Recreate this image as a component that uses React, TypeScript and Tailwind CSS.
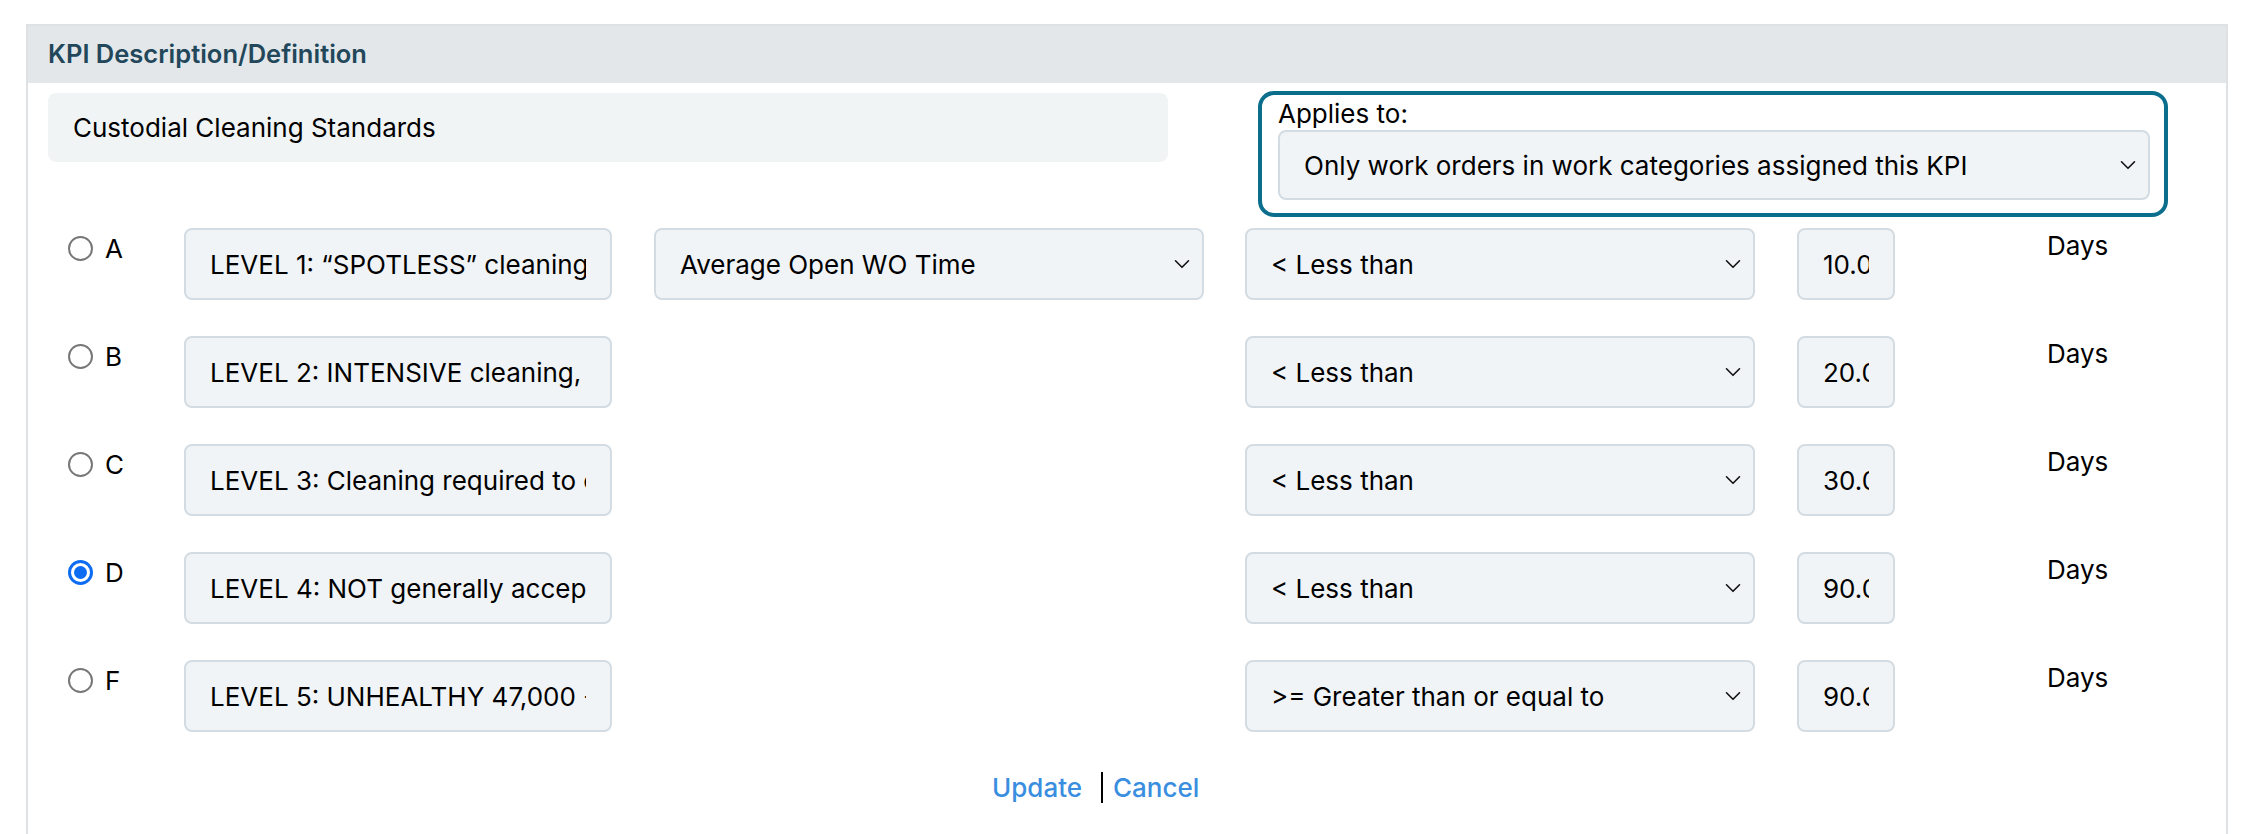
import { useState } from "react";

const comparators = ["< Less than", "<= Less than or equal to", "> Greater than", ">= Greater than or equal to", "= Equal to"];
const metrics = ["Average Open WO Time", "Average Completion Time", "Percent Completed On Time"];

const rows = [
  { grade: "A", desc: "LEVEL 1: “SPOTLESS” cleaning, 100% of the time", metric: true, cmp: "< Less than", value: "10.00" },
  { grade: "B", desc: "LEVEL 2: INTENSIVE cleaning, most of the time", metric: false, cmp: "< Less than", value: "20.00" },
  { grade: "C", desc: "LEVEL 3: Cleaning required to ensure health", metric: false, cmp: "< Less than", value: "30.00" },
  { grade: "D", desc: "LEVEL 4: NOT generally acceptable for most", metric: false, cmp: "< Less than", value: "90.00" },
  { grade: "F", desc: "LEVEL 5: UNHEALTHY 47,000 - 60,000 sq ft", metric: false, cmp: ">= Greater than or equal to", value: "90.00" },
];

function Chevron() {
  return (
    <svg
      width="16"
      height="10"
      viewBox="0 0 16 10"
      fill="none"
      className="pointer-events-none absolute right-[14px] top-1/2 -translate-y-1/2"
    >
      <path d="M1.5 1.8 L8 8.3 L14.5 1.8" stroke="#111" strokeWidth="1.6" strokeLinecap="round" strokeLinejoin="round" />
    </svg>
  );
}

function SelectBox({ value, options, className }: { value: string; options: string[]; className: string }) {
  return (
    <div className={`relative ${className}`}>
      <select
        defaultValue={value}
        className="h-full w-full appearance-none rounded-lg border-2 border-[#d3dce2] bg-[#f1f4f6] pl-6 pr-12 text-[26px] text-black outline-none"
      >
        {options.map((o) => (
          <option key={o}>{o}</option>
        ))}
      </select>
      <Chevron />
    </div>
  );
}

function Radio({ checked, onClick }: { checked: boolean; onClick: () => void }) {
  if (checked) {
    return (
      <span onClick={onClick} className="flex h-[25px] w-[25px] items-center justify-center rounded-full border-[3px] border-[#0e6cf3] bg-white">
        <span className="h-[13px] w-[13px] rounded-full bg-[#0e6cf3]" />
      </span>
    );
  }
  return <span onClick={onClick} className="h-[25px] w-[25px] rounded-full border-2 border-[#777] bg-white" />;
}

export default function App() {
  const [selected, setSelected] = useState("D");

  return (
    <div className="h-screen overflow-hidden bg-white pl-[26px] pr-[27px] pt-6 font-['Inter','Liberation_Sans',sans-serif] text-black">
      <div className="min-h-[830px] border-2 border-b-0 border-[#dfe2e5]">
        <div className="flex h-[57px] items-center bg-[#e3e7ea] px-5">
          <h3 className="text-[25.5px] font-semibold text-[#22475b]">KPI Description/Definition</h3>
        </div>

        <div className="px-5">
          <div className="flex items-start">
            <div className="mt-[10px] flex h-[69px] w-[1120px] items-center rounded-lg bg-[#f1f4f5] px-[25px] text-[26px]">
              Custodial Cleaning Standards
            </div>
            <div className="ml-auto mr-[38px] mt-2 h-[126px] w-[910px] rounded-2xl border-4 border-[#0c6e8d] pl-4 pr-[14px]">
              <div className="pt-0.5 text-[26px] leading-[33px]">Applies to:</div>
              <SelectBox
                value="Only work orders in work categories assigned this KPI"
                options={["Only work orders in work categories assigned this KPI", "All work orders"]}
                className="h-[70px] w-full"
              />
            </div>
          </div>

          <div className="mt-[11px] flex flex-col gap-9">
            {rows.map((r) => (
              <div key={r.grade} className="flex h-[72px] items-start">
                <div className="mt-0.5 flex h-9 w-[136px] items-center gap-3 pl-5 text-[26px]">
                  <Radio checked={selected === r.grade} onClick={() => setSelected(r.grade)} />
                  <span>{r.grade}</span>
                </div>
                <input
                  readOnly
                  value={r.desc}
                  className="h-[72px] w-[428px] rounded-lg border-2 border-[#d3dce2] bg-[#f1f4f6] px-6 text-[26px] text-black outline-none"
                />
                {r.metric ? (
                  <SelectBox value="Average Open WO Time" options={metrics} className="ml-[42px] h-[72px] w-[550px]" />
                ) : (
                  <div className="ml-[42px] w-[550px]" />
                )}
                <SelectBox value={r.cmp} options={comparators} className="ml-[41px] h-[72px] w-[510px]" />
                <input
                  readOnly
                  value={r.value}
                  className="ml-[42px] h-[72px] w-[98px] rounded-lg border-2 border-[#d3dce2] bg-[#f1f4f6] px-6 text-[26px] text-black outline-none"
                />
                <span className="ml-[152px] text-[26px] leading-9">Days</span>
              </div>
            ))}
          </div>

          <div className="mt-[37px] flex h-9 items-center pl-[944px] text-[26px] font-medium">
            <a href="#" className="text-[#3a8ee0]">Update</a>
            <span className="ml-[19px] h-[31px] w-[2px] bg-black" />
            <a href="#" className="ml-[10px] text-[#3a8ee0]">Cancel</a>
          </div>
        </div>
      </div>
    </div>
  );
}
